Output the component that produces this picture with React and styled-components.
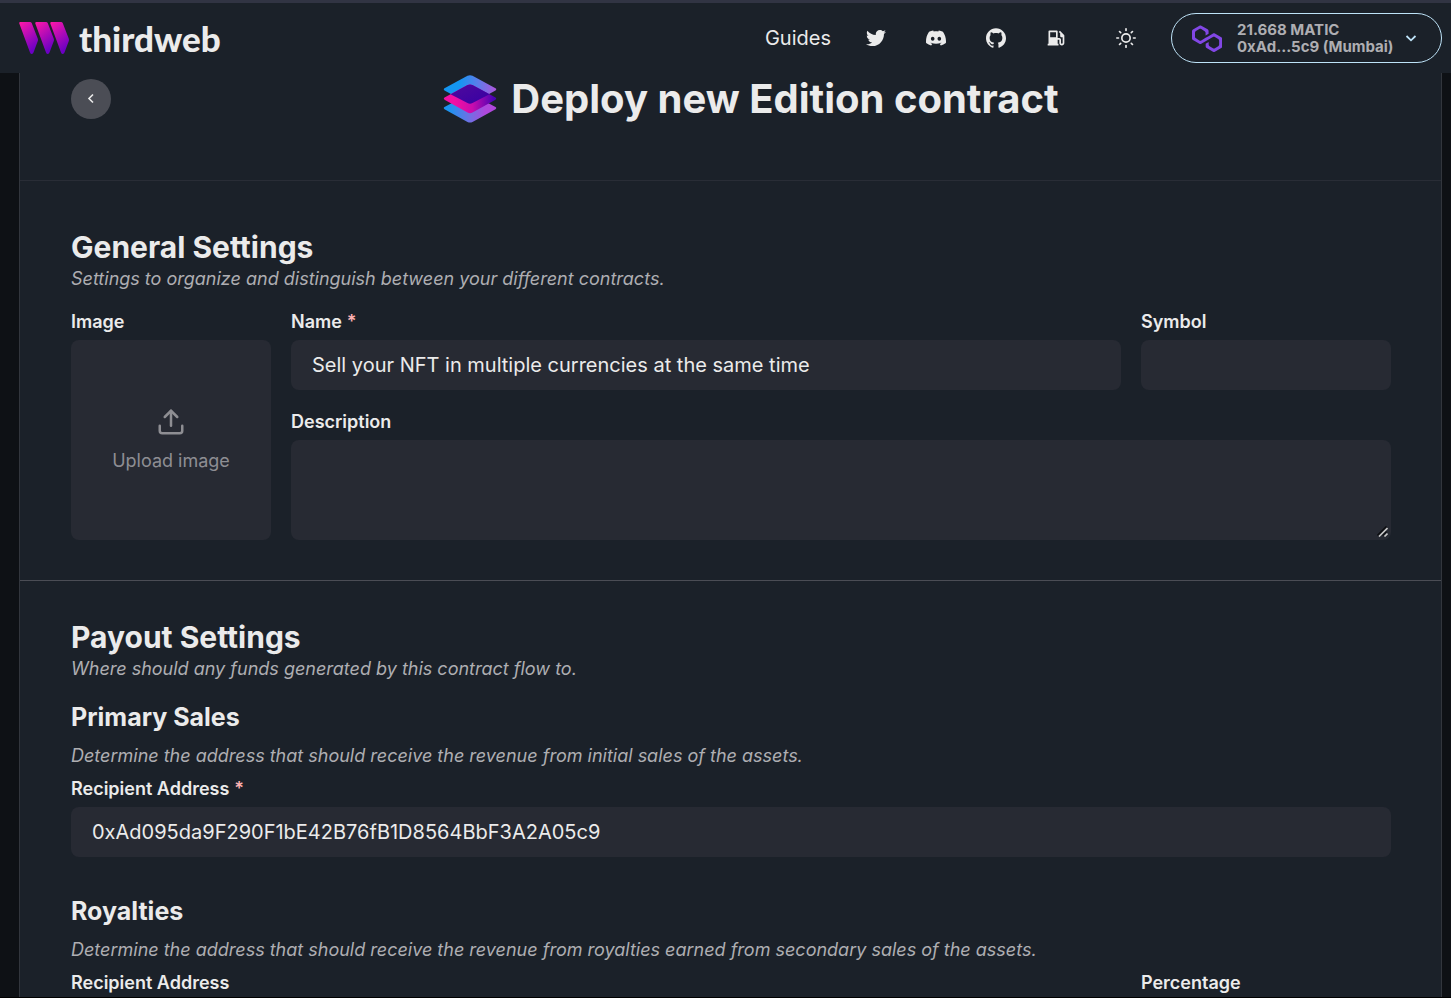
import React from "react";
import styled, { createGlobalStyle } from "styled-components";
import { SiDiscord, SiGithub } from "react-icons/si";
import { FaTwitter } from "react-icons/fa";
import { FiUpload, FiSun } from "react-icons/fi";
import { RiGasStationFill } from "react-icons/ri";

const Global = createGlobalStyle`
  *, *::before, *::after { box-sizing: border-box; }
  html { background: #0e1115; color-scheme: dark; }
  body {
    margin: 0;
    color: #ebebeb;
    font-family: Inter, "Liberation Sans", sans-serif;
    font-size: 20px;
    line-height: 30px;
  }
  h1, h2, h3, p { margin: 0; }
  button, input, textarea { font: inherit; color: inherit; }
`;

const Page = styled.div`
  height: 100vh;
  overflow: hidden;
  display: flex;
  flex-direction: column;
  border-bottom: 1px solid #000;
`;

const Header = styled.header`
  flex: none;
  display: flex;
  align-items: center;
  justify-content: space-between;
  height: 73px;
  padding: 0 9px 0 19px;
  border-top: 3px solid #313443;
  background: #1b2129;
`;

const Logo = styled.a`
  display: flex;
  text-decoration: none;
  svg { display: block; }
`;

const Wordmark = styled.span`
  margin-left: 9px;
  color: #ebebeb;
  font-family: Lato, Inter, sans-serif;
  font-size: 35px;
  font-weight: 900;
  line-height: 34px;
`;

const HeaderNav = styled.nav`
  display: flex;
  align-items: center;
`;

const GuidesLink = styled.a`
  margin-right: 25px;
  color: #ebebeb;
  text-decoration: none;
`;

const IconLink = styled.a`
  display: grid;
  place-items: center;
  width: 40px;
  height: 40px;
  margin-right: 20px;
  color: #ebebeb;
`;

const IconButton = styled.button`
  display: grid;
  place-items: center;
  width: 40px;
  height: 40px;
  margin: 0 25px 0 10px;
  padding: 0;
  border: 0;
  background: none;
`;

const WalletButton = styled.button`
  display: flex;
  align-items: center;
  width: 271px;
  height: 50px;
  padding: 0 20px;
  border: 1px solid #bee3f8;
  border-radius: 25px;
  background: none;
  color: #bee3f8;
  text-align: left;
`;

const WalletText = styled.span`
  flex: 1;
  margin-left: 15px;
  color: #aeaeb2;
  font-size: 15px;
  font-weight: 700;
  line-height: 17px;
  white-space: nowrap;
`;

const Line = styled.span`
  display: block;
`;

const Card = styled.main`
  flex: 1;
  min-height: 0;
  margin: 0 9px 0 19px;
  overflow-y: auto;
  scrollbar-width: none;
  border: solid #32363d;
  border-width: 0 1px;
  background: #1b2129;
`;

const TitleBar = styled.div`
  display: grid;
  grid-template-columns: 40px 1fr;
  align-items: start;
  height: 108px;
  padding: 0 50px 0 51px;
  border-bottom: 1px solid #292d36;
`;

const BackButton = styled.button`
  display: grid;
  place-items: center;
  width: 40px;
  height: 40px;
  margin-top: 6px;
  padding: 0;
  border: 0;
  border-radius: 50%;
  background: #4b4d55;
`;

const Title = styled.h1`
  display: flex;
  align-items: center;
  justify-content: center;
  gap: 14px;
  font-size: 40px;
  font-weight: 700;
  line-height: 52px;
`;

const Form = styled.form`
  padding-top: 10px;
`;

const Section = styled.section`
  padding: 38px 50px 40px 51px;
  border-bottom: 1px solid #4b4d55;
`;

const SectionTitle = styled.h2`
  font-size: 30px;
  font-weight: 700;
  line-height: 36px;
`;

const SubTitle = styled.h3`
  margin-bottom: 10px;
  font-size: 25px;
  font-weight: 700;
  line-height: 30px;
`;

const Hint = styled.p`
  color: #aeaeb2;
  font-size: 18px;
  font-style: italic;
  line-height: 27px;
`;

const SubSection = styled.div`
  margin-top: ${(p) => p.$gap}px;
`;

const GeneralGrid = styled.div`
  display: grid;
  grid-template-columns: 200px 1fr 250px;
  gap: 20px;
  margin-top: 18px;
`;

const PayoutGrid = styled.div`
  display: grid;
  grid-template-columns: ${(p) => (p.$split ? "1fr 250px" : "1fr")};
  gap: 20px;
  margin-top: 8px;
`;

const Field = styled.div`
  display: flex;
  flex-direction: column;
  grid-column: ${(p) => p.$column || "auto"};
  grid-row: ${(p) => p.$row || "auto"};
`;

const Label = styled.label`
  margin-bottom: 6px;
  font-size: 18px;
  font-weight: 600;
  line-height: 24px;
`;

const Required = styled.span`
  margin-left: 5px;
  color: #feb2b2;
`;

const Input = styled.input`
  width: 100%;
  height: 50px;
  padding: 0 21px;
  border: 0;
  border-radius: 8px;
  background: #272a33;
`;

const TextAreaBox = styled.div`
  position: relative;
`;

const TextArea = styled.textarea`
  display: block;
  width: 100%;
  height: 100px;
  padding: 10px 21px;
  border: 0;
  border-radius: 8px;
  background: #272a33;
  resize: vertical;
  &::-webkit-resizer { background: transparent; }
`;

const Grip = styled.svg`
  position: absolute;
  right: 3px;
  bottom: 3px;
  pointer-events: none;
`;

const UploadButton = styled.button`
  display: flex;
  flex-direction: column;
  align-items: center;
  justify-content: center;
  gap: 10px;
  width: 200px;
  height: 200px;
  border: 0;
  border-radius: 8px;
  background: #272a33;
  color: #8e8e93;
  font-size: 18px;
  line-height: 27px;
`;

function ThirdwebMark() {
  return (
    <svg width="51" height="34" viewBox="0 0 51 34" aria-hidden="true">
      <defs>
        <linearGradient id="bar" x1="0" y1="0" x2=".5" y2="1">
          <stop offset="0" stopColor="#ff18a8" />
          <stop offset="1" stopColor="#6c00c4" />
        </linearGradient>
      </defs>
      {[0, 16, 31].map((x) => (
        <path
          key={x}
          transform={`translate(${x} 0)`}
          fill="url(#bar)"
          d="M1.3 1H11Q12.300 1 12.800 2.200L18.800 17.800Q19.200 19 18.800 20L14.600 31.300Q14 33 12.800 33Q11.600 33 11 31.400L.3 2.600Q-.2 1 1.300 1Z"
        />
      ))}
    </svg>
  );
}

function PolygonMark() {
  return (
    <svg width="30" height="27" viewBox="0 0 38 33" fill="#8247e5" aria-hidden="true">
      <path d="M29 10.200c-.7-.4-1.600-.4-2.400 0L21 13.500l-3.800 2.100-5.500 3.300c-.7.4-1.600.4-2.400 0L5 16.300c-.7-.4-1.200-1.200-1.200-2.100v-5c0-.8.4-1.600 1.200-2.100l4.300-2.500c.7-.4 1.600-.4 2.400 0L16 7.200c.7.4 1.200 1.200 1.200 2.100v3.300l3.800-2.200V7c0-.8-.4-1.600-1.200-2.100l-8-4.700c-.7-.4-1.600-.4-2.400 0L1.200 5C.4 5.400 0 6.200 0 7v9.400c0 .8.400 1.600 1.200 2.100l8.100 4.700c.7.4 1.600.4 2.400 0l5.500-3.200 3.800-2.200 5.500-3.200c.7-.4 1.600-.4 2.400 0l4.300 2.500c.7.4 1.200 1.200 1.200 2.100v5c0 .8-.4 1.600-1.200 2.100L29 28.800c-.7.4-1.600.4-2.400 0l-4.300-2.500c-.7-.4-1.200-1.200-1.200-2.100V21l-3.800 2.200v3.300c0 .8.400 1.600 1.200 2.100l8.100 4.700c.7.4 1.600.4 2.400 0l8.100-4.700c.7-.4 1.200-1.200 1.200-2.100V17c0-.8-.4-1.600-1.200-2.100L29 10.200z" />
    </svg>
  );
}

function EditionMark() {
  return (
    <svg width="54" height="48" viewBox="0 0 54 48" aria-hidden="true">
      <defs>
        <linearGradient id="top" x1="0" y1="0" x2="1" y2="0">
          <stop offset=".3" stopColor="#1496f2" />
          <stop offset=".65" stopColor="#5b7dea" />
          <stop offset="1" stopColor="#b055dc" />
        </linearGradient>
        <linearGradient id="bottom" x1="0" y1="0" x2="1" y2="0">
          <stop offset=".1" stopColor="#1c94f0" />
          <stop offset=".5" stopColor="#7070e4" />
          <stop offset=".8" stopColor="#b047dc" />
        </linearGradient>
        <linearGradient id="middle" x1="0" y1="0" x2="1" y2="0">
          <stop offset=".2" stopColor="#f210a4" />
          <stop offset=".55" stopColor="#c80cae" />
          <stop offset=".95" stopColor="#4a03b4" />
        </linearGradient>
        <linearGradient id="overlap" x1="0" y1="0" x2="1" y2="1">
          <stop offset="0" stopColor="#500a9c" />
          <stop offset="1" stopColor="#3600a4" />
        </linearGradient>
      </defs>
      <path fill="url(#bottom)" d="M1.500 32 24.500 19.700Q27 18.500 29.500 19.700L52.500 32Q54 33 52.500 34.200L29.500 46.900Q27 48.200 24.500 46.900L1.500 34.200Q0 33 1.500 32Z" />
      <path fill="url(#top)" d="M1.500 13.200 24.500.8Q27-.3 29.500.8L52.500 13.200Q54 14.200 52.500 15.400L29.500 28.100Q27 29.300 24.500 28.100L1.500 15.400Q0 14.200 1.500 13.200Z" />
      <path fill="url(#middle)" d="M1.500 22.500 24.500 10Q27 8.800 29.500 10L52.500 22.500Q54 23.600 52.500 24.800L29.500 37.500Q27 38.800 24.500 37.500L1.500 24.800Q0 23.600 1.500 22.500Z" />
      <path fill="url(#overlap)" d="M7.500 19.200 24.500 10Q27 8.800 29.500 10L46.500 19.200 29.500 28.100Q27 29.300 24.500 28.100Z" />
    </svg>
  );
}

export default function App() {
  return (
    <Page>
      <Global />
      <Header>
        <Logo href="#" aria-label="thirdweb home">
          <ThirdwebMark />
          <Wordmark>thirdweb</Wordmark>
        </Logo>
        <HeaderNav>
          <GuidesLink href="#">Guides</GuidesLink>
          <IconLink href="#" aria-label="Twitter"><FaTwitter size={20} /></IconLink>
          <IconLink href="#" aria-label="Discord"><SiDiscord size={20} /></IconLink>
          <IconLink href="#" aria-label="GitHub"><SiGithub size={20} /></IconLink>
          <IconLink href="#" aria-label="Gas"><RiGasStationFill size={20} /></IconLink>
          <IconButton type="button" aria-label="Light mode"><FiSun size={20} /></IconButton>
          <WalletButton type="button">
            <PolygonMark />
            <WalletText>
              <Line>21.668 MATIC</Line>
              <Line>0xAd...5c9 (Mumbai)</Line>
            </WalletText>
            <svg width="20" height="20" viewBox="0 0 20 20" fill="none" stroke="currentColor" strokeWidth="1.800" aria-hidden="true">
              <path d="m5.500 8 4.500 4.300L14.500 8" />
            </svg>
          </WalletButton>
        </HeaderNav>
      </Header>
      <Card>
        <TitleBar>
          <BackButton type="button" aria-label="Back">
            <svg width="20" height="20" viewBox="0 0 20 20" fill="none" stroke="currentColor" strokeWidth="1.600" aria-hidden="true">
              <path d="M12 5.500 8 9.500l4 4" />
            </svg>
          </BackButton>
          <Title><EditionMark />Deploy new Edition contract</Title>
        </TitleBar>
        <Form>
          <Section>
            <SectionTitle>General Settings</SectionTitle>
            <Hint>Settings to organize and distinguish between your different contracts.</Hint>
            <GeneralGrid>
              <Field $row="1 / 3">
                <Label htmlFor="image">Image</Label>
                <UploadButton id="image" type="button"><FiUpload size={30} />Upload image</UploadButton>
              </Field>
              <Field>
                <Label htmlFor="name">Name<Required>*</Required></Label>
                <Input id="name" defaultValue="Sell your NFT in multiple currencies at the same time" />
              </Field>
              <Field>
                <Label htmlFor="symbol">Symbol</Label>
                <Input id="symbol" />
              </Field>
              <Field $column="2 / 4">
                <Label htmlFor="description">Description</Label>
                <TextAreaBox>
                  <TextArea id="description" />
                  <Grip width="11" height="11" viewBox="0 0 11 11" fill="none" aria-hidden="true">
                    <path d="M.5 9.500 9.500.5M5.500 9.500l4-4" stroke="#0c0d10" strokeWidth="1.600" />
                    <path d="M2 10.500 10.500 2M7.500 10.500l3-3" stroke="#c8c8c8" strokeWidth="1.600" />
                  </Grip>
                </TextAreaBox>
              </Field>
            </GeneralGrid>
          </Section>
          <Section>
            <SectionTitle>Payout Settings</SectionTitle>
            <Hint>Where should any funds generated by this contract flow to.</Hint>
            <SubSection $gap={20}>
              <SubTitle>Primary Sales</SubTitle>
              <Hint>Determine the address that should receive the revenue from initial sales of the assets.</Hint>
              <PayoutGrid>
                <Field>
                  <Label htmlFor="primary">Recipient Address<Required>*</Required></Label>
                  <Input id="primary" defaultValue="0xAd095da9F290F1bE42B76fB1D8564BbF3A2A05c9" />
                </Field>
              </PayoutGrid>
            </SubSection>
            <SubSection $gap={39}>
              <SubTitle>Royalties</SubTitle>
              <Hint>Determine the address that should receive the revenue from royalties earned from secondary sales of the assets.</Hint>
              <PayoutGrid $split>
                <Field>
                  <Label htmlFor="royalty">Recipient Address</Label>
                  <Input id="royalty" />
                </Field>
                <Field>
                  <Label htmlFor="percentage">Percentage</Label>
                  <Input id="percentage" />
                </Field>
              </PayoutGrid>
            </SubSection>
          </Section>
        </Form>
      </Card>
    </Page>
  );
}
